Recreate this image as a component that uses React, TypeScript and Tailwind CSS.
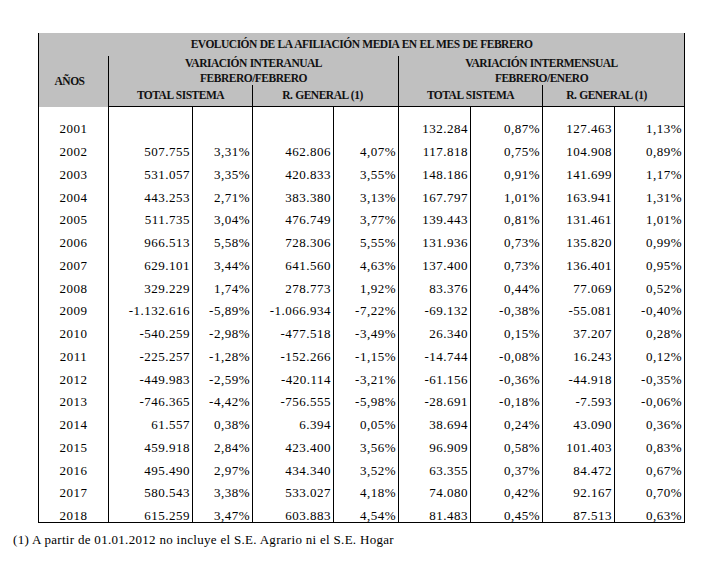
import React from "react";

const rows: string[][] = [
  ["2001", "", "", "", "", "132.284", "0,87%", "127.463", "1,13%"],
  ["2002", "507.755", "3,31%", "462.806", "4,07%", "117.818", "0,75%", "104.908", "0,89%"],
  ["2003", "531.057", "3,35%", "420.833", "3,55%", "148.186", "0,91%", "141.699", "1,17%"],
  ["2004", "443.253", "2,71%", "383.380", "3,13%", "167.797", "1,01%", "163.941", "1,31%"],
  ["2005", "511.735", "3,04%", "476.749", "3,77%", "139.443", "0,81%", "131.461", "1,01%"],
  ["2006", "966.513", "5,58%", "728.306", "5,55%", "131.936", "0,73%", "135.820", "0,99%"],
  ["2007", "629.101", "3,44%", "641.560", "4,63%", "137.400", "0,73%", "136.401", "0,95%"],
  ["2008", "329.229", "1,74%", "278.773", "1,92%", "83.376", "0,44%", "77.069", "0,52%"],
  ["2009", "-1.132.616", "-5,89%", "-1.066.934", "-7,22%", "-69.132", "-0,38%", "-55.081", "-0,40%"],
  ["2010", "-540.259", "-2,98%", "-477.518", "-3,49%", "26.340", "0,15%", "37.207", "0,28%"],
  ["2011", "-225.257", "-1,28%", "-152.266", "-1,15%", "-14.744", "-0,08%", "16.243", "0,12%"],
  ["2012", "-449.983", "-2,59%", "-420.114", "-3,21%", "-61.156", "-0,36%", "-44.918", "-0,35%"],
  ["2013", "-746.365", "-4,42%", "-756.555", "-5,98%", "-28.691", "-0,18%", "-7.593", "-0,06%"],
  ["2014", "61.557", "0,38%", "6.394", "0,05%", "38.694", "0,24%", "43.090", "0,36%"],
  ["2015", "459.918", "2,84%", "423.400", "3,56%", "96.909", "0,58%", "101.403", "0,83%"],
  ["2016", "495.490", "2,97%", "434.340", "3,52%", "63.355", "0,37%", "84.472", "0,67%"],
  ["2017", "580.543", "3,38%", "533.027", "4,18%", "74.080", "0,42%", "92.167", "0,70%"],
  ["2018", "615.259", "3,47%", "603.883", "4,54%", "81.483", "0,45%", "87.513", "0,63%"],
];

const cols = "grid grid-cols-[69px_84px_60px_81px_65px_72px_72px_72px_70px]";

export default function App() {
  return (
    <div className="w-[709px] h-[578px] bg-white text-black font-['Liberation_Serif',serif]">
      <div className="pt-[33px] pl-[38px]">
        <div className="w-[647px] border-l border-r border-b border-black">
          {/* Header */}
          <div
            className={`${cols} grid-rows-[23px_29px_22px] bg-[#c0c0c0] font-bold text-[11.5px] tracking-[-0.5px] [word-spacing:0.5px] leading-[15px] text-[#111]`}
          >
            <div className="col-span-9 flex items-center justify-center">
              EVOLUCIÓN DE LA AFILIACIÓN MEDIA EN EL MES DE FEBRERO
            </div>
            <div className="row-span-2 flex items-center justify-center pr-[8px]">AÑOS</div>
            <div className="col-span-4 flex flex-col items-center justify-center border-l border-black">
              <span>VARIACIÓN INTERANUAL</span>
              <span>FEBRERO/FEBRERO</span>
            </div>
            <div className="col-span-4 flex flex-col items-center justify-center border-l border-black">
              <span>VARIACIÓN INTERMENSUAL</span>
              <span>FEBRERO/ENERO</span>
            </div>
            <div className="col-span-2 flex items-center justify-center border-l border-b border-black">
              TOTAL SISTEMA
            </div>
            <div className="col-span-2 flex items-center justify-center border-l border-b border-black pr-[6px]">
              R. GENERAL (1)
            </div>
            <div className="col-span-2 flex items-center justify-center border-l border-b border-black">
              TOTAL SISTEMA
            </div>
            <div className="col-span-2 flex items-center justify-center border-l border-b border-black pr-[14px]">
              R. GENERAL (1)
            </div>
          </div>
          {/* Body */}
          <div className={`${cols} grid-rows-[5.5px_repeat(18,22.75px)] text-[13px] tracking-[0.5px]`}>
            <div />
            {[1, 2, 3, 4, 5, 6, 7, 8].map((i) => (
              <div key={`s${i}`} className="border-l border-black" />
            ))}
            {rows.map((r) =>
              r.map((v, i) =>
                i === 0 ? (
                  <div key={`${r[0]}-${i}`} className="flex items-end justify-center leading-3">
                    {v}
                  </div>
                ) : (
                  <div
                    key={`${r[0]}-${i}`}
                    className="flex items-end justify-end border-l border-black pr-[2px] leading-3"
                  >
                    {v}
                  </div>
                )
              )
            )}
          </div>
        </div>
      </div>
      <div className="pl-[13px] mt-[9px] text-[13px] tracking-[0.3px] leading-4">
        (1) A partir de 01.01.2012 no incluye el S.E. Agrario ni el S.E. Hogar
      </div>
    </div>
  );
}
